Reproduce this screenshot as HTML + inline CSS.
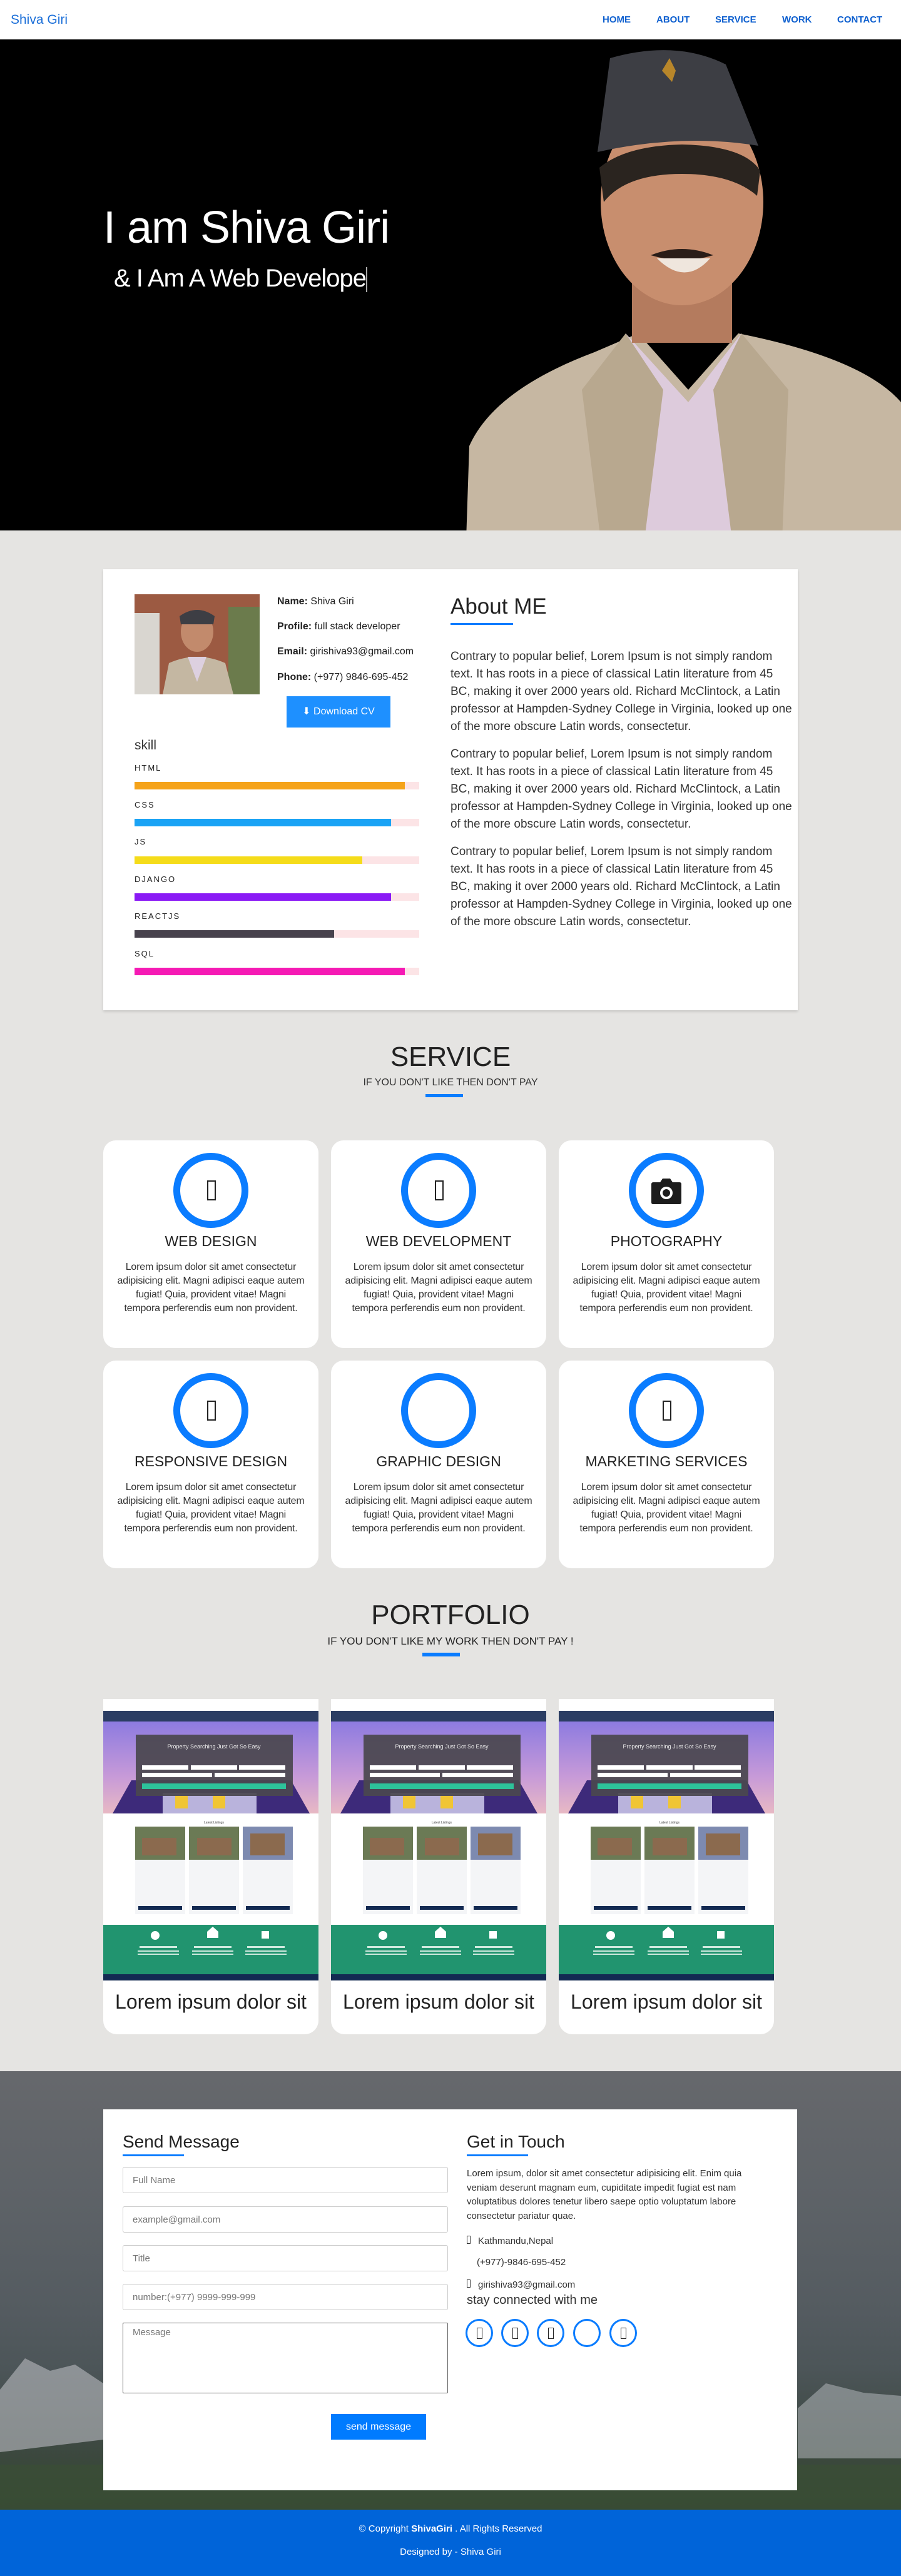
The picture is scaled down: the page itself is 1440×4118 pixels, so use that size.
<!DOCTYPE html>
<html><head><meta charset="utf-8">
<style>
*{box-sizing:border-box;margin:0;padding:0}
body{width:1440px;height:4118px;background:#e5e4e2;font-family:"Liberation Sans",sans-serif;color:#222;position:relative;overflow:hidden}
.abs{position:absolute}
nav{position:absolute;left:0;top:0;width:1440px;height:63px;background:#fff}
.logo{position:absolute;left:17px;top:20px;font-size:21px;color:#1a6ed8}
.nl{position:absolute;top:23px;font-size:15px;font-weight:bold;color:#0d5fcf}
.hero{position:absolute;left:0;top:63px;width:1440px;height:785px;background:#000;overflow:hidden}
.card{position:absolute;background:#fff}
.bar{position:absolute;left:215px;width:455px;height:12px;background:#fce4e6}
.bar i{display:block;height:12px}
.lbl{position:absolute;left:215px;font-size:13px;letter-spacing:2px;color:#222}
.para{font-size:19px;line-height:28px;color:#333;margin-bottom:16px}
.sc{position:absolute;width:344px;height:332px;background:#fff;border-radius:20px;text-align:center}
.circ{position:absolute;left:112px;top:20px;width:120px;height:120px;border:11px solid #0a7cff;border-radius:50%}
.tofu{position:absolute;left:43px;top:33px;width:14px;height:32px;border:2px solid #222}
.sc h3{position:absolute;top:148px;left:0;width:100%;font-weight:normal;font-size:23px;color:#222}
.sc p{position:absolute;top:192px;left:0;width:344px;font-size:16px;line-height:22px;color:#333;letter-spacing:-0.2px;white-space:nowrap}
.pc{position:absolute;width:344px;height:536px;background:#fff;border-radius:0 0 22px 22px;overflow:hidden}
.pc .cap{position:absolute;top:466px;left:0;width:100%;text-align:center;font-size:32px;color:#222}
.mock{position:absolute;left:0;top:0;width:344px;height:450px;background:#fff;overflow:hidden}
.inp{position:absolute;left:196px;width:520px;height:42px;border:1px solid #ccc;border-radius:3px;background:#fff;font-size:15px;color:#777;padding:12px 15px}
.soc{position:absolute;top:3707px;width:44px;height:45px;border:3px solid #0a7cff;border-radius:50%}
.soc b{position:absolute;left:15px;top:11px;width:9px;height:18px;border:1.5px solid #222}
</style></head><body>

<nav>
<div class="logo">Shiva Giri</div>
<div class="nl" style="left:963px">HOME</div>
<div class="nl" style="left:1049px">ABOUT</div>
<div class="nl" style="left:1143px">SERVICE</div>
<div class="nl" style="left:1250px">WORK</div>
<div class="nl" style="left:1338px">CONTACT</div>
</nav>

<div class="hero">
<svg class="abs" style="left:0;top:0" width="1440" height="785" viewBox="0 0 1440 785">
<path d="M745 800 L750 650 Q790 560 950 500 L1020 470 L1100 560 L1180 470 Q1380 510 1440 580 L1440 800 Z" fill="#c6b7a2"/>
<path d="M1000 470 L1100 580 L1185 470 L1200 800 L1010 800 Z" fill="#ddcbdc"/>
<path d="M1000 470 L1060 560 L1030 800 L960 800 L930 560 Z" fill="#b8a88f"/>
<path d="M1185 470 L1140 560 L1170 800 L1250 800 L1260 560 Z" fill="#b8a88f"/>
<rect x="1010" y="390" width="160" height="95" fill="#b47b5e"/>
<ellipse cx="1090" cy="260" rx="130" ry="165" fill="#c88e6e"/>
<path d="M958 205 Q1000 170 1090 168 Q1190 170 1215 210 L1210 250 Q1170 215 1090 215 Q1000 215 965 260 Z" fill="#2a241f"/>
<path d="M975 30 Q1080 0 1160 40 L1212 170 Q1090 150 955 180 Z" fill="#3d3e44"/>
<path d="M1058 50 l12 -20 l10 20 l-6 18 z" fill="#b8862a"/>
<path d="M1040 345 Q1090 325 1140 345 Q1090 360 1040 345 Z" fill="#2a1d18"/>
<path d="M1050 350 Q1095 395 1135 350 Z" fill="#efe6dd"/>
</svg>
<div class="abs" style="left:165px;top:260px;font-size:72px;color:#fff;letter-spacing:-1px">I am Shiva Giri</div>
<div class="abs" style="left:182px;top:360px;font-size:40px;color:#fff;letter-spacing:-1px">&amp; I Am A Web Develope<span style="display:inline-block;width:2px;height:40px;background:#aaa;vertical-align:middle"></span></div>
</div>

<!-- ABOUT -->
<div class="card" style="left:165px;top:910px;width:1110px;height:705px;box-shadow:0 2px 4px rgba(0,0,0,.15)"></div>
<svg class="abs" style="left:215px;top:950px" width="200" height="160"><rect width="200" height="160" fill="#9c5a42"/><rect x="0" y="30" width="40" height="130" fill="#d9d6d0"/><rect x="150" y="20" width="50" height="140" fill="#6b7b4c"/><ellipse cx="100" cy="60" rx="26" ry="32" fill="#c28a6c"/><path d="M72 35 Q100 15 128 35 L126 48 L74 48 Z" fill="#3d3e44"/><path d="M45 160 L55 110 Q100 90 145 110 L158 160 Z" fill="#c4b7a2"/><path d="M85 100 L100 140 L115 100 Z" fill="#ddd0e0"/></svg>
<div class="abs" style="left:443px;top:952px;font-size:16px;line-height:20px"><b>Name:</b> Shiva Giri</div>
<div class="abs" style="left:443px;top:993px;font-size:16px"><b>Profile:</b> full stack developer</div>
<div class="abs" style="left:443px;top:1033px;font-size:16px"><b>Email:</b> girishiva93@gmail.com</div>
<div class="abs" style="left:443px;top:1074px;font-size:16px"><b>Phone:</b> (+977) 9846-695-452</div>
<div class="abs" style="left:458px;top:1113px;width:166px;height:50px;background:#1e90ff;color:#fff;font-size:16px;text-align:center;line-height:50px">&#11015; Download CV</div>
<div class="abs" style="left:215px;top:1180px;font-size:21px;color:#333">skill</div>
<div class="lbl" style="top:1220px">HTML</div><div class="bar" style="top:1250px"><i style="width:95%;background:#f5a31a"></i></div>
<div class="lbl" style="top:1279px">CSS</div><div class="bar" style="top:1309px"><i style="width:90%;background:#1aa3f5"></i></div>
<div class="lbl" style="top:1338px">JS</div><div class="bar" style="top:1369px"><i style="width:80%;background:#f5dc1a"></i></div>
<div class="lbl" style="top:1398px">DJANGO</div><div class="bar" style="top:1428px"><i style="width:90%;background:#8a1af5"></i></div>
<div class="lbl" style="top:1457px">REACTJS</div><div class="bar" style="top:1487px"><i style="width:70%;background:#47424d"></i></div>
<div class="lbl" style="top:1517px">SQL</div><div class="bar" style="top:1547px"><i style="width:95%;background:#f51ab4"></i></div>
<div class="abs" style="left:720px;top:950px;font-size:35px;color:#222">About ME</div>
<div class="abs" style="left:720px;top:996px;width:100px;height:3px;background:#0a7cff"></div>
<div class="abs" style="left:720px;top:1036px;width:548px">
<p class="para">Contrary to popular belief, Lorem Ipsum is not simply random text. It has roots in a piece of classical Latin literature from 45 BC, making it over 2000 years old. Richard McClintock, a Latin professor at Hampden-Sydney College in Virginia, looked up one of the more obscure Latin words, consectetur.</p>
<p class="para">Contrary to popular belief, Lorem Ipsum is not simply random text. It has roots in a piece of classical Latin literature from 45 BC, making it over 2000 years old. Richard McClintock, a Latin professor at Hampden-Sydney College in Virginia, looked up one of the more obscure Latin words, consectetur.</p>
<p class="para">Contrary to popular belief, Lorem Ipsum is not simply random text. It has roots in a piece of classical Latin literature from 45 BC, making it over 2000 years old. Richard McClintock, a Latin professor at Hampden-Sydney College in Virginia, looked up one of the more obscure Latin words, consectetur.</p>
</div>

<!-- SERVICE -->
<div class="abs" style="left:0;top:1665px;width:1440px;text-align:center;font-size:44px;color:#222">SERVICE</div>
<div class="abs" style="left:0;top:1722px;width:1440px;text-align:center;font-size:16px;color:#333">IF YOU DON'T LIKE THEN DON'T PAY</div>
<div class="abs" style="left:680px;top:1749px;width:60px;height:5px;background:#0a7cff"></div>

<div class="sc" style="left:165px;top:1823px"><div class="circ"><div class="tofu"></div></div><h3>WEB DESIGN</h3><p>Lorem ipsum dolor sit amet consectetur<br>adipisicing elit. Magni adipisci eaque autem<br>fugiat! Quia, provident vitae! Magni<br>tempora perferendis eum non provident.</p></div>
<div class="sc" style="left:529px;top:1823px"><div class="circ"><div class="tofu"></div></div><h3>WEB DEVELOPMENT</h3><p>Lorem ipsum dolor sit amet consectetur<br>adipisicing elit. Magni adipisci eaque autem<br>fugiat! Quia, provident vitae! Magni<br>tempora perferendis eum non provident.</p></div>
<div class="sc" style="left:893px;top:1823px"><div class="circ"><svg class="abs" style="left:24px;top:28px" width="50" height="44" viewBox="0 0 50 44"><path d="M4 8 H15 L19 2 H31 L35 8 H46 Q49 8 49 11 V40 Q49 43 46 43 H4 Q1 43 1 40 V11 Q1 8 4 8 Z" fill="#1c1c1c"/><circle cx="25" cy="25" r="10" fill="#fff"/><circle cx="25" cy="25" r="6" fill="#1c1c1c"/></svg></div><h3>PHOTOGRAPHY</h3><p>Lorem ipsum dolor sit amet consectetur<br>adipisicing elit. Magni adipisci eaque autem<br>fugiat! Quia, provident vitae! Magni<br>tempora perferendis eum non provident.</p></div>
<div class="sc" style="left:165px;top:2175px"><div class="circ"><div class="tofu"></div></div><h3>RESPONSIVE DESIGN</h3><p>Lorem ipsum dolor sit amet consectetur<br>adipisicing elit. Magni adipisci eaque autem<br>fugiat! Quia, provident vitae! Magni<br>tempora perferendis eum non provident.</p></div>
<div class="sc" style="left:529px;top:2175px"><div class="circ"></div><h3>GRAPHIC DESIGN</h3><p>Lorem ipsum dolor sit amet consectetur<br>adipisicing elit. Magni adipisci eaque autem<br>fugiat! Quia, provident vitae! Magni<br>tempora perferendis eum non provident.</p></div>
<div class="sc" style="left:893px;top:2175px"><div class="circ"><div class="tofu"></div></div><h3>MARKETING SERVICES</h3><p>Lorem ipsum dolor sit amet consectetur<br>adipisicing elit. Magni adipisci eaque autem<br>fugiat! Quia, provident vitae! Magni<br>tempora perferendis eum non provident.</p></div>

<!-- PORTFOLIO -->
<div class="abs" style="left:0;top:2557px;width:1440px;text-align:center;font-size:44px;color:#222">PORTFOLIO</div>
<div class="abs" style="left:0;top:2614px;width:1440px;text-align:center;font-size:17px;color:#222">IF YOU DON'T LIKE MY WORK THEN DON'T PAY !</div>
<div class="abs" style="left:675px;top:2642px;width:60px;height:6px;background:#0a7cff"></div>

<svg width="0" height="0" style="position:absolute"><defs>
<linearGradient id="sky" x1="0" y1="0" x2="0" y2="1"><stop offset="0" stop-color="#8d7be0"/><stop offset=".6" stop-color="#c79ad8"/><stop offset="1" stop-color="#e8b9c4"/></linearGradient>
<g id="mk">
<rect width="344" height="450" fill="#fff"/>
<rect y="19" width="344" height="17" fill="#2b3d63"/>
<rect y="36" width="344" height="147" fill="url(#sky)"/>
<path d="M15 183 L45 130 L300 130 L330 183 Z" fill="#3d2a7a"/>
<rect x="95" y="150" width="150" height="33" fill="#b9b3dc"/>
<rect x="115" y="155" width="20" height="20" fill="#f0c534"/><rect x="175" y="155" width="20" height="20" fill="#f0c534"/>
<rect x="52" y="57" width="251" height="98" fill="#4a474f" opacity=".93"/>
<text x="177" y="79" font-size="9" fill="#eee" text-anchor="middle" font-family="Liberation Sans">Property Searching Just Got So Easy</text>
<rect x="62" y="106" width="74" height="7" fill="#fff"/><rect x="140" y="106" width="74" height="7" fill="#fff"/><rect x="217" y="106" width="74" height="7" fill="#fff"/>
<rect x="62" y="118" width="112" height="7" fill="#fff"/><rect x="178" y="118" width="113" height="7" fill="#fff"/>
<rect x="62" y="135" width="230" height="9" fill="#2dc29a"/>
<text x="177" y="199" font-size="5" fill="#333" text-anchor="middle" font-family="Liberation Sans">Latest Listings</text>
<g fill="#f4f5f7"><rect x="51" y="204" width="80" height="140"/><rect x="137" y="204" width="80" height="140"/><rect x="223" y="204" width="80" height="140"/></g>
<g fill="#6b7a55"><rect x="51" y="204" width="80" height="53"/><rect x="137" y="204" width="80" height="53"/><rect x="223" y="204" width="80" height="53" fill="#7d8ab0"/></g>
<g fill="#8b6a4e"><rect x="62" y="222" width="55" height="28"/><rect x="150" y="222" width="55" height="28"/><rect x="235" y="215" width="55" height="35"/></g>
<g fill="#132a52"><rect x="56" y="331" width="70" height="6"/><rect x="142" y="331" width="70" height="6"/><rect x="228" y="331" width="70" height="6"/></g>
<rect y="361" width="344" height="79" fill="#21946f"/>
<g fill="#fff"><circle cx="83" cy="378" r="7"/><path d="M166 372 l9 -8 l9 8 v10 h-18z"/><rect x="253" y="371" width="12" height="12"/></g>
<g fill="#cfe9de"><rect x="58" y="395" width="60" height="3"/><rect x="145" y="395" width="60" height="3"/><rect x="230" y="395" width="60" height="3"/><rect x="55" y="402" width="66" height="2"/><rect x="142" y="402" width="66" height="2"/><rect x="227" y="402" width="66" height="2"/><rect x="55" y="407" width="66" height="2"/><rect x="142" y="407" width="66" height="2"/><rect x="227" y="407" width="66" height="2"/></g>
<rect y="440" width="344" height="16" fill="#132a52"/>
</g></defs></svg>

<div class="pc" style="left:165px;top:2716px"><svg class="mock" width="344" height="450"><use href="#mk"/></svg><div class="cap">Lorem ipsum dolor sit</div></div>
<div class="pc" style="left:529px;top:2716px"><svg class="mock" width="344" height="450"><use href="#mk"/></svg><div class="cap">Lorem ipsum dolor sit</div></div>
<div class="pc" style="left:893px;top:2716px"><svg class="mock" width="344" height="450"><use href="#mk"/></svg><div class="cap">Lorem ipsum dolor sit</div></div>

<!-- CONTACT -->
<div class="abs" style="left:0;top:3311px;width:1440px;height:701px;background:linear-gradient(180deg,#66686c 0%,#5d6267 30%,#545b60 55%,#4c5558 68%,#3f4a45 82%,#34452f 100%)"></div>
<svg class="abs" style="left:0;top:3700px" width="1440" height="312"><path d="M0 120 L40 70 L80 90 L120 80 L165 110 L165 200 L0 220 Z" fill="#a9adb0" opacity=".7"/><path d="M1275 150 L1320 110 L1380 125 L1440 130 L1440 230 L1275 230 Z" fill="#a9adb0" opacity=".6"/><rect y="240" width="1440" height="72" fill="#3b4f36" opacity=".7"/></svg>
<div class="card" style="left:165px;top:3372px;width:1109px;height:609px"></div>
<div class="abs" style="left:196px;top:3408px;font-size:28px;color:#222">Send Message</div>
<div class="abs" style="left:196px;top:3444px;width:98px;height:3px;background:#0a7cff"></div>
<div class="abs" style="left:746px;top:3408px;font-size:28px;color:#222">Get in Touch</div>
<div class="abs" style="left:746px;top:3444px;width:98px;height:3px;background:#0a7cff"></div>
<div class="inp" style="top:3464px">Full Name</div>
<div class="inp" style="top:3527px">example@gmail.com</div>
<div class="inp" style="top:3589px">Title</div>
<div class="inp" style="top:3651px">number:(+977) 9999-999-999</div>
<div class="inp" style="top:3713px;height:113px;border:1px solid #666;border-radius:2px;padding:6px 15px">Message</div>
<div class="abs" style="left:529px;top:3859px;width:152px;height:41px;background:#007bff;color:#fff;font-size:16px;text-align:center;line-height:41px">send message</div>
<div class="abs" style="left:746px;top:3464px;width:480px;font-size:15px;line-height:22.5px;color:#333">Lorem ipsum, dolor sit amet consectetur adipisicing elit. Enim quia veniam deserunt magnam eum, cupiditate impedit fugiat est nam voluptatibus dolores tenetur libero saepe optio voluptatum labore consectetur pariatur quae.</div>
<div class="abs" style="left:746px;top:3574px;font-size:15px;color:#333"><span style="display:inline-block;width:6px;height:13px;border:1px solid #333;margin-right:12px"></span>Kathmandu,Nepal</div>
<div class="abs" style="left:762px;top:3608px;font-size:15px;color:#333">(+977)-9846-695-452</div>
<div class="abs" style="left:746px;top:3644px;font-size:15px;color:#333"><span style="display:inline-block;width:6px;height:13px;border:1px solid #333;margin-right:12px"></span>girishiva93@gmail.com</div>
<div class="abs" style="left:746px;top:3666px;font-size:20px;color:#333">stay connected with me</div>
<div class="soc" style="left:744px"><b></b></div>
<div class="soc" style="left:801px"><b></b></div>
<div class="soc" style="left:858px"><b></b></div>
<div class="soc" style="left:916px"></div>
<div class="soc" style="left:974px"><b></b></div>

<div class="abs" style="left:0;top:4012px;width:1440px;height:106px;background:#0064d9;color:#fff;text-align:center;font-size:15px">
<div style="margin-top:22px">© Copyright <b>ShivaGiri</b> . All Rights Reserved</div>
<div style="margin-top:20px">Designed by - Shiva Giri</div>
</div>
</body></html>
